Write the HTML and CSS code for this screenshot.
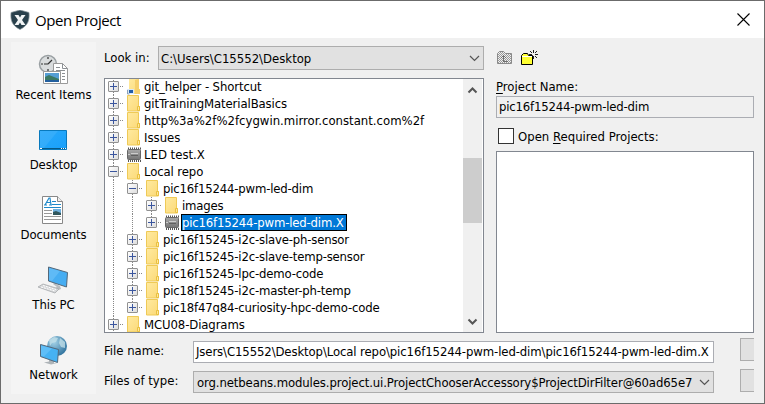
FILE: index.html
```html
<!DOCTYPE html>
<html lang="en">
<head>
<meta charset="utf-8">
<title>Open Project</title>
<link rel="stylesheet" href="styles.css">
</head>
<body>
<svg width="0" height="0" class="defs">
  <defs>
    <linearGradient id="gold" x1="0" y1="0" x2="1" y2="1"><stop offset="0" stop-color="#ffeaa0"/><stop offset="1" stop-color="#fbd977"/></linearGradient>
    <linearGradient id="blue" x1="0" y1="0" x2="1" y2="1"><stop offset="0" stop-color="#2aa9fa"/><stop offset="1" stop-color="#18a0fb"/></linearGradient>
    <linearGradient id="chipfill" x1="0" y1="0" x2="0" y2="1"><stop offset="0" stop-color="#a8a8a8"/><stop offset="1" stop-color="#757575"/></linearGradient>
    <radialGradient id="globe" cx=".35" cy=".3" r=".8"><stop offset="0" stop-color="#a5d3e8"/><stop offset="1" stop-color="#276b98"/></radialGradient>
    <pattern id="dither" width="2" height="2" patternUnits="userSpaceOnUse"><path d="M0 0h1v1H0zM1 1h1v1H1z" fill="#999"/></pattern>
    <symbol id="folder" viewBox="0 0 16 17"><path d="M.5.5h11v11h1v4.500h-12z" fill="url(#gold)" stroke="#efca57"/><path d="M10.500 15.500v-4h2v4z" fill="#ffe79a" stroke="#e9c040"/></symbol>
    <symbol id="shortcut" viewBox="0 0 16 17"><path d="M2 1h10v10h1v5H2z" fill="url(#gold)"/><path d="M8 2l4-1v10h1v5H8z" fill="#f6d06d"/><path d="M0 11h7v5H0z" fill="#d9e8f5"/><path d="M2 12h4v3H2z" fill="#235ca8"/><path d="M.5 12v4h2" fill="none" stroke="#8aa0b8"/></symbol>
    <symbol id="chip" viewBox="0 0 16 17"><path d="M1 2.500h13M1 15h13" stroke="#555" stroke-width="2" stroke-dasharray="1 1"/><rect x=".5" y="3.500" width="13" height="10" rx="1" fill="url(#chipfill)" stroke="#666"/><path d="M1 8.500h2M4 7.500h7" stroke="#ccc"/><path d="M4 9.500h7" stroke="#606060"/></symbol>
    <symbol id="down" viewBox="0 0 11 7"><path d="M1 1l4.500 4.500L10 1" fill="none" stroke="#555" stroke-width="1.200"/></symbol>
  </defs>
</svg>
<div class="window">
  <header class="titlebar">
    <svg class="logo" width="20" height="20" viewBox="0 0 20 20"><path d="M10 0l9 2.500c.7 8-1 13-9 17C2 15.500.3 10.500 1 2.500z" fill="#29404c" stroke="#8c999f" stroke-width=".7"/><path d="M4.500 5h4L10 7.500 11.500 5h4l-3.500 5 3.500 5h-4L10 12.500 8.500 15h-4L8 10z" fill="#f2f5f6"/></svg>
    <h1>Open Project</h1>
    <svg class="close" width="13" height="13" viewBox="0 0 13 13"><path d="M.5.5l12 12M12.500.5l-12 12" stroke="#000" stroke-width="1.100"/></svg>
  </header>
  <div class="content">
    <nav class="places">
      <a class="place recent"><svg width="32" height="32" viewBox="0 0 32 32"><circle cx="11" cy="10" r="8.500" fill="#d9dcdd" stroke="#999fa2" stroke-width="1.500"/><path d="M11 10l4-4M11 10H7M11 3v2M11 15v2M4 10h2" stroke="#333" stroke-width="1.200"/><path d="M16.500 9.500h9l5 5v15h-14z" fill="#fff" stroke="#999"/><path d="M25.500 9.500v5h5M19 13.500h4M19 16.500h9M25 19.500h3M25 22.500h3M25 25.500h3" stroke="#8c9094" fill="none"/><path d="M6.500 17.500h17v12h-17z" fill="#fff" stroke="#999"/><path d="M8 19h14v9H8z" fill="#559ed5"/><path d="M8 23l4-2 10 4v3H8z" fill="#3c7964"/><path d="M8 26h14v2H8z" fill="#235f9e"/></svg><span>Recent Items</span></a>
      <a class="place"><svg width="32" height="32" viewBox="0 0 32 32"><path d="M2.500 6.500h27v19h-27z" fill="url(#blue)" stroke="#0879bd"/><path d="M3 7h18L7 24H3z" fill="#fff" opacity=".08"/><path d="M3 24.500h26" stroke="#075985"/><path d="M3 24.500h2M24 24.500h1M26 24.500h1M28 24.500h1" stroke="#fff"/></svg><span>Desktop</span></a>
      <a class="place"><svg width="32" height="32" viewBox="0 0 32 32"><path d="M5.500 2.500h15l5 5v22h-20z" fill="#fff" stroke="#888"/><path d="M20.500 2.500v5h5" fill="#eee" stroke="#888"/><path d="M8 11l4-7h1l1 7M9 8.500h4M7 11h3M12 11h3M15 7.500h4M15 10.500h9M7 13.500h17" stroke="#2089c9" stroke-width="1.200" fill="none"/><path d="M7 16.500h8M7 19.500h8M7 22.500h17M7 25.500h17" stroke="#999"/><path d="M16 15h8v6h-8z" fill="#6fb1df"/><path d="M16 18l3-1 5 2v2h-8z" fill="#31575d"/></svg><span>Documents</span></a>
      <a class="place"><svg width="32" height="32" viewBox="0 0 32 32"><path d="M17 19l6 3 1 3-5 2-3-2 4-2-4-3z" fill="#b9bdc0"/><path d="M11.500 3l19 5.500-1 14.500-18-6z" fill="#46adf2" stroke="#53687a"/><path d="M12 4l11 3-8 10-3-1z" fill="#8ed5ff" opacity=".35"/><path d="M1 23l5-3 16 5-4 4z" fill="#d5d7d9" stroke="#a8abad" stroke-width=".8"/><path d="M4 23l14 4M6 21.500l13 4" stroke="#fff" stroke-dasharray="2 1"/></svg><span>This PC</span></a>
      <a class="place"><svg width="32" height="32" viewBox="0 0 32 32"><circle cx="20" cy="12" r="10" fill="url(#globe)"/><path d="M12 6l5-3 4 1-2 4-4 1-2 3zM23 4l5 4v6l-4-1-2-4z" fill="#c6e1e9" opacity=".75"/><path d="M12 25l5 1v3h3l-6 1.500-7-2 5-1z" fill="#aeb4b8"/><path d="M3.500 10.500l18 5-1 13-17-6z" fill="#46b2f3" stroke="#53687a"/><path d="M4 11.500l11 3-8 8-3-1z" fill="#8ed5ff" opacity=".35"/></svg><span>Network</span></a>
    </nav>
    <main class="chooser">
      <div class="lookin"><label class="t">Look in:</label><div class="combo"><span>C:\Users\C15552\Desktop</span><svg width="11" height="7"><use href="#down"/></svg></div>
        <svg class="up" width="16" height="14" viewBox="0 0 16 14"><path d="M.5 12.500v-10l2-2h4l2 2h6v10z" fill="url(#dither)" stroke="#8a8a8a"/><path d="M6.500 10V5M4 7l2.500-2.500L9 7M6 10.500h5" stroke="#707070" fill="none"/></svg>
        <svg class="new" width="17" height="16" viewBox="0 0 17 16"><path d="M.5 14.500v-9l2-2h4l1 2h4v9z" fill="#ff3" stroke="#000"/><path d="M1 6.500h10" stroke="#fff"/><path d="M12.500 0v3M12.500 6v3M8 4.500h3M14 4.500h3M9 1l2 2M14 6l2 2M16 1l-2 2" stroke="#222"/></svg>
      </div>
      <div class="panes">
        <div class="tree">
          <ul class="rows">
            <li><i class="exp"><b class="box plus"></b></i><svg class="ic"><use href="#shortcut"/></svg><span class="snug">git_helper - Shortcut</span></li>
            <li><i class="exp"><b class="box plus"></b></i><svg class="ic"><use href="#folder"/></svg><span class="snug">gitTrainingMaterialBasics</span></li>
            <li><i class="exp"><b class="box plus"></b></i><svg class="ic"><use href="#folder"/></svg><span>http%3a%2f%2fcygwin.mirror.constant.com%2f</span></li>
            <li><i class="exp"><b class="box plus"></b></i><svg class="ic"><use href="#folder"/></svg><span>Issues</span></li>
            <li><i class="exp"><b class="box plus"></b></i><svg class="ic"><use href="#chip"/></svg><span>LED test.X</span></li>
            <li><i class="exp"><b class="box"></b></i><svg class="ic"><use href="#folder"/></svg><span class="snug">Local repo</span></li>
            <li><i class="guide"></i><i class="exp"><b class="box"></b></i><svg class="ic"><use href="#folder"/></svg><span class="tight">pic16f15244-pwm-led-dim</span></li>
            <li><i class="guide"></i><i class="guide"></i><i class="exp"><b class="box plus"></b></i><svg class="ic"><use href="#folder"/></svg><span class="tight">images</span></li>
            <li class="selected"><i class="guide"></i><i class="guide"></i><i class="exp last"><b class="box plus"></b></i><svg class="ic"><use href="#chip"/></svg><span class="tight">pic16f15244-pwm-led-dim.X</span></li>
            <li><i class="guide"></i><i class="exp"><b class="box plus"></b></i><svg class="ic"><use href="#folder"/></svg><span class="tight">pic16f15245-i2c-slave-ph-sensor</span></li>
            <li><i class="guide"></i><i class="exp"><b class="box plus"></b></i><svg class="ic"><use href="#folder"/></svg><span class="tight">pic16f15245-i2c-slave-temp-sensor</span></li>
            <li><i class="guide"></i><i class="exp"><b class="box plus"></b></i><svg class="ic"><use href="#folder"/></svg><span class="tight">pic16f15245-lpc-demo-code</span></li>
            <li><i class="guide"></i><i class="exp"><b class="box plus"></b></i><svg class="ic"><use href="#folder"/></svg><span class="tight">pic18f15245-i2c-master-ph-temp</span></li>
            <li><i class="guide"></i><i class="exp last"><b class="box plus"></b></i><svg class="ic"><use href="#folder"/></svg><span class="tight">pic18f47q84-curiosity-hpc-demo-code</span></li>
            <li><i class="exp"><b class="box plus"></b></i><svg class="ic"><use href="#folder"/></svg><span class="snug">MCU08-Diagrams</span></li>
          </ul>
          <div class="scroll"><svg width="11" height="8" viewBox="0 0 11 8"><path d="M1.500 6.500l4-4 4 4" fill="none" stroke="#555" stroke-width="2"/></svg><div class="thumb"></div><svg width="11" height="8" viewBox="0 0 11 8"><path d="M1.500 1.500l4 4 4-4" fill="none" stroke="#555" stroke-width="2"/></svg></div>
        </div>
        <section class="details">
          <label class="pname"><u>P</u>roject Name:</label>
          <div class="field readonly tight">pic16f15244-pwm-led-dim</div>
          <label class="check"><i></i><span>Open <u>R</u>equired Projects:</span></label>
          <div class="list"></div>
        </section>
      </div>
      <div class="bottom">
        <div class="fields">
          <label class="t">File name:</label><div class="field snug"><span>Jsers\C15552\Desktop\Local repo\pic16f15244-pwm-led-dim\pic16f15244-pwm-led-dim.X</span></div>
          <label class="t">Files of type:</label><div class="combo type snug"><span>org.netbeans.modules.project.ui.ProjectChooserAccessory$ProjectDirFilter@60ad65e7</span><svg width="11" height="7"><use href="#down"/></svg></div>
        </div>
        <div class="buttons"><div class="btn"></div><div class="btn"></div></div>
      </div>
    </main>
  </div>
</div>
</body>
</html>
```
FILE: styles.css
```css
* { box-sizing: border-box; }
body { margin: 0; font: 13px/17px "DejaVu Sans Condensed", Tahoma, sans-serif; color: #000; overflow: hidden; }
.defs { display: block; position: absolute; }
svg { display: block; flex: none; }
i { display: block; font-style: normal; }
span { white-space: pre; }
u { text-underline-offset: 2px; }
.snug { letter-spacing: -0.11px; }
.tight { letter-spacing: -0.18px; }

.window { width: 765px; height: 404px; border: 1px solid #6b6b6b; background: #f0f0f0; display: flex; flex-direction: column; }
.titlebar { height: 37px; background: #fff; display: flex; align-items: center; padding: 0 14px 0 9px; }
.titlebar h1 { margin: 0 auto 0 5px; font: 400 15px/20px "Open Sans", sans-serif; letter-spacing: -0.45px; }

.content { flex: 1; display: flex; padding: 4px 10px 9px; }
.places { width: 85px; height: 352px; background: #f4f4f4; padding-top: 12px; display: flex; flex-direction: column; letter-spacing: -0.08px; }
.place { height: 70px; flex: none; display: flex; flex-direction: column; align-items: center; line-height: 17px; }
.place svg { margin-right: 1px; }
.place:last-child { height: 50px; }

.chooser { width: 650px; margin-left: 8px; display: flex; flex-direction: column; }
.lookin { display: flex; height: 32px; margin-top: 4px; align-items: flex-start; }
.lookin label { width: 54px; line-height: 24px; }
.combo { width: 326px; height: 24px; border: 1px solid #adadad; background: #e1e1e1; display: flex; align-items: center; justify-content: space-between; padding: 0 3px 0 2px; }
.up { margin: 5px 0 0 13px; }
.new { margin: 4px 0 0 8px; }

.panes { display: flex; gap: 12px; height: 255px; }
.tree { width: 380px; border: 1px solid #828790; background: #fff; display: flex; overflow: hidden; padding-right: 1px; }
.rows { flex: 1; margin: -1px 0 0; padding: 0; list-style: none; }
.rows li { height: 17px; display: flex; }
.guide, .exp { flex: none; width: 19px; height: 17px; background: repeating-linear-gradient(#888 0 1px, transparent 1px 2px) 8px 0 / 1px 100% no-repeat; }
.exp { padding: 3px 0 0 3px; background: repeating-linear-gradient(#888 0 1px, transparent 1px 2px) 8px 0 / 1px 100% no-repeat, repeating-linear-gradient(90deg, #888 0 1px, transparent 1px 2px) 15px 8px / 4px 1px no-repeat; }
.exp.last { background-size: 1px 8px, 4px 1px; }
.box { display: block; width: 11px; height: 11px; border: 1px solid #919191; border-radius: 1px; background: linear-gradient(#3b569e, #3b569e) 1px 4px / 7px 1px no-repeat, linear-gradient(135deg, #fff, #ddd); }
.box.plus { background: linear-gradient(#3b569e, #3b569e) 1px 4px / 7px 1px no-repeat, linear-gradient(#3b569e, #3b569e) 4px 1px / 1px 7px no-repeat, linear-gradient(135deg, #fff, #ddd); }
.ic { width: 16px; height: 17px; margin: 0 0 0 3px; }
.rows span { height: 17px; line-height: 17px; padding-left: 1px; }
.rows .selected span { background: #0078d7; color: #fff; border: 1px solid #000; padding: 0 1px 0 0; width: 166px; line-height: 15px; }
.scroll { width: 19px; background: #f0f0f0; display: flex; flex-direction: column; align-items: center; justify-content: space-between; padding: 7px 0 6px; }
.thumb { width: 19px; height: 65px; background: #cdcdcd; margin-top: -31px; }

.details { width: 258px; display: flex; flex-direction: column; }
.pname { height: 18px; line-height: 18px; }
.field { height: 22px; border: 1px solid #abadb3; background: #fff; line-height: 20px; padding: 0 1px 0 2px; overflow: hidden; }
.readonly { background: #f0f0f0; }
.check { display: flex; align-items: center; height: 16px; margin: 10px 0 7px 2px; }
.check i { width: 16px; height: 16px; border: 1px solid #333; background: #fff; margin-right: 4px; }
.list { flex: 1; border: 1px solid #828790; background: #fff; }

.bottom { display: flex; justify-content: space-between; margin-top: 5px; }
.fields { display: grid; grid-template-columns: 89px 521px; row-gap: 8px; margin-top: 3px; }
.fields .t { line-height: 20px; }
.type { width: 521px; height: 22px; padding-left: 3px; }
.buttons { display: flex; flex-direction: column; gap: 8px; }
.btn { width: 14px; height: 23px; background: #e1e1e1; border: 1px solid #adadad; border-right: 0; }
```
